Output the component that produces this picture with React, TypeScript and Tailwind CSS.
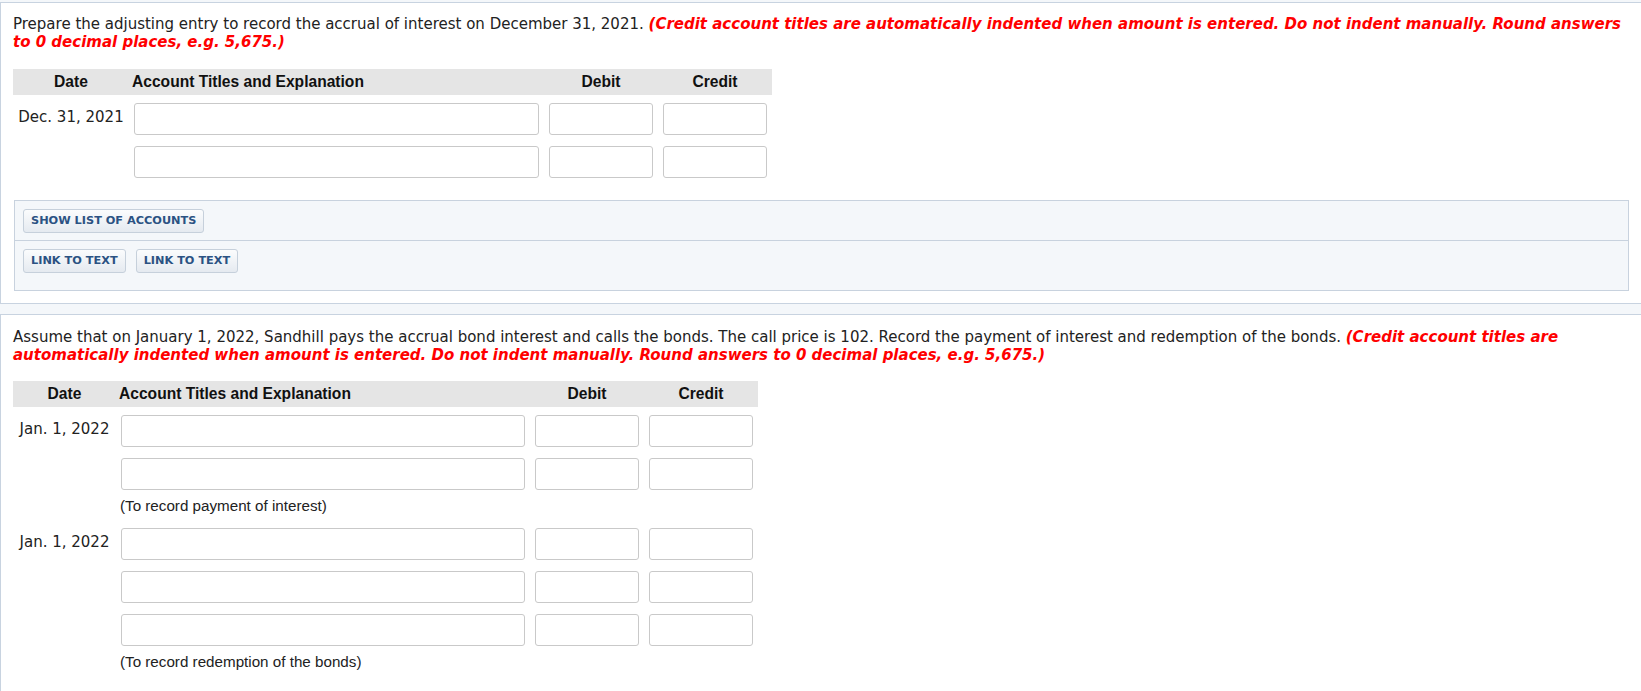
import React from 'react';

const bodyFont = { fontFamily: '"DejaVu Sans", Verdana, sans-serif' };

type Cols = { date: string; account: string };

const Field = ({ className }: { className: string }) => (
  <input
    type="text"
    className={`h-[32px] rounded-[3px] border border-[#c9c9c9] bg-white outline-none ${className}`}
  />
);

const HeaderRow = ({ cols }: { cols: Cols }) => (
  <div className="flex h-[26px] items-center bg-[#e5e5e5] font-['Liberation_Sans',Arial,sans-serif] text-[15.6px] font-bold text-[#111]">
    <div className={`${cols.date} text-center`}>Date</div>
    <div className={`${cols.account} pl-[3px]`}>Account Titles and Explanation</div>
    <div className="w-[114px] text-center">Debit</div>
    <div className="w-[114px] text-center">Credit</div>
  </div>
);

const EntryRow = ({ cols, date }: { cols: Cols; date?: string }) => (
  <div className="flex items-start">
    <div className={`${cols.date} pt-[5px] text-center text-[15px] leading-[18px] text-[#222]`} style={bodyFont}>
      {date}
    </div>
    <div className={`${cols.account} px-[5px]`}>
      <Field className="w-full" />
    </div>
    <div className="w-[114px] px-[5px]">
      <Field className="w-full" />
    </div>
    <div className="w-[114px] px-[5px]">
      <Field className="w-full" />
    </div>
  </div>
);

const Caption = ({ cols, text }: { cols: Cols; text: string }) => (
  <div className="mt-[7px] flex">
    <div className={cols.date} />
    <div className="pl-[4px] font-['Liberation_Sans',Arial,sans-serif] text-[15.2px] leading-[18px] text-[#222]">{text}</div>
  </div>
);

const AppButton = ({ label }: { label: string }) => (
  <button
    type="button"
    className="h-[24px] rounded-[3px] border border-[#c6d0db] bg-gradient-to-b from-[#fbfcfd] to-[#e5eaf0] px-[7px] text-[11.3px] font-bold uppercase leading-none text-[#2b5283]"
    style={bodyFont}
  >
    {label}
  </button>
);

const Instructions = ({ lead }: { lead: string }) => (
  <p className="text-[15px] leading-[18px] text-[#222]" style={bodyFont}>
    {lead}{' '}
    <span className="font-bold italic text-[#ff0000]">
      (Credit account titles are automatically indented when amount is entered. Do not indent manually. Round answers to 0
      decimal places, e.g. 5,675.)
    </span>
  </p>
);

export default function App() {
  const first: Cols = { date: 'w-[116px]', account: 'w-[415px]' };
  const second: Cols = { date: 'w-[103px]', account: 'w-[414px]' };

  return (
    <div className="min-h-screen bg-[#f4f7fa] pt-[2px]">
      <section className="border-y border-l border-[#c8d3e0] bg-white pb-[12px] pl-[12px] pr-[12px] pt-[12px]">
        <Instructions lead="Prepare the adjusting entry to record the accrual of interest on December 31, 2021." />
        <div className="mt-[18px] w-[759px]">
          <HeaderRow cols={first} />
          <div className="flex flex-col gap-[11px] pt-[8px]">
            <EntryRow cols={first} date="Dec. 31, 2021" />
            <EntryRow cols={first} />
          </div>
        </div>
        <div className="ml-[1px] mt-[22px] border border-[#c8d2de] bg-[#f4f7fa]">
          <div className="flex px-[8px] pb-[7px] pt-[8px]">
            <AppButton label="Show List of Accounts" />
          </div>
          <div className="flex gap-[10px] border-t border-[#c8d2de] px-[8px] pb-[17px] pt-[8px]">
            <AppButton label="Link to Text" />
            <AppButton label="Link to Text" />
          </div>
        </div>
      </section>

      <section className="mt-[10px] border-l border-t border-[#c8d3e0] bg-white pb-[30px] pl-[12px] pr-[12px] pt-[13px]">
        <Instructions lead="Assume that on January 1, 2022, Sandhill pays the accrual bond interest and calls the bonds. The call price is 102. Record the payment of interest and redemption of the bonds." />
        <div className="mt-[17px] w-[745px]">
          <HeaderRow cols={second} />
          <div className="flex flex-col gap-[11px] pt-[8px]">
            <EntryRow cols={second} date="Jan. 1, 2022" />
            <EntryRow cols={second} />
          </div>
          <Caption cols={second} text="(To record payment of interest)" />
          <div className="mt-[13px] flex flex-col gap-[11px]">
            <EntryRow cols={second} date="Jan. 1, 2022" />
            <EntryRow cols={second} />
            <EntryRow cols={second} />
          </div>
          <Caption cols={second} text="(To record redemption of the bonds)" />
        </div>
      </section>
    </div>
  );
}
